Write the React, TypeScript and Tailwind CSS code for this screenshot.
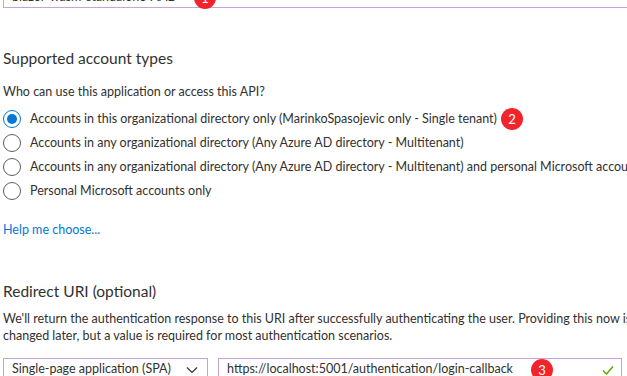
import React from 'react';

function Badge({ n }: { n: number }) {
  return (
    <span className="inline-flex h-[22px] w-[22px] items-center justify-center rounded-full bg-[#f0242a] text-[13px] leading-none text-white">
      {n}
    </span>
  );
}

function Radio({ checked, label, badge }: { checked?: boolean; label: string; badge?: number }) {
  return (
    <div className="flex h-[24px] items-center">
      <span
        className={
          checked
            ? 'flex h-[18px] w-[18px] shrink-0 items-center justify-center rounded-full border border-[#0078d4]'
            : 'flex h-[18px] w-[18px] shrink-0 items-center justify-center rounded-full border border-[#605e5c]'
        }
      >
        {checked && <span className="h-[10px] w-[10px] rounded-full bg-[#0078d4]" />}
      </span>
      <span className="ml-[9px] whitespace-nowrap">{label}</span>
      {badge && (
        <span className="ml-[4px]">
          <Badge n={badge} />
        </span>
      )}
    </div>
  );
}

export default function App() {
  const accountTypes = [
    { label: 'Accounts in this organizational directory only (MarinkoSpasojevic only - Single tenant)', checked: true, badge: 2 },
    { label: 'Accounts in any organizational directory (Any Azure AD directory - Multitenant)' },
    { label: 'Accounts in any organizational directory (Any Azure AD directory - Multitenant) and personal Microsoft accounts (e.g. Skype, Xbox)' },
    { label: 'Personal Microsoft accounts only' }
  ];

  return (
    <div className="relative h-[376px] w-[627px] overflow-hidden bg-white pl-[3px] text-[12.5px] text-[#323130] font-['Segoe_UI','Lato',sans-serif]">
      {/* name input, mostly scrolled off */}
      <div className="relative -mt-[25px] flex h-[33px] items-center border border-r-0 border-[#c6a3d8] pl-[8px]">
        <span className="mt-[12px]">blazor-wasm-standalone-AAD</span>
        <span className="absolute left-[190px] top-[11px]">
          <Badge n={1} />
        </span>
      </div>

      <h2 className="mt-[38px] text-[15.5px] leading-[24px]">Supported account types</h2>
      <p className="mt-[13px] leading-[18px]">Who can use this application or access this API?</p>

      <div className="mt-[6px] flex flex-col">
        {accountTypes.map((t, i) => (
          <Radio key={i} label={t.label} checked={t.checked} badge={t.badge} />
        ))}
      </div>

      <a className="mt-[18px] block leading-[18px] text-[#0078d4]">Help me choose...</a>

      <h2 className="mt-[40px] text-[15.5px] leading-[24px]">Redirect URI (optional)</h2>
      <p className="mt-[7px] leading-[17px]">
        <span className="block whitespace-nowrap">
          We'll return the authentication response to this URI after successfully authenticating the user. Providing this now is optional and it can be
        </span>
        <span className="block whitespace-nowrap">changed later, but a value is required for most authentication scenarios.</span>
      </p>

      <div className="mt-[14px] flex gap-[10px]">
        <div className="flex h-[22px] w-[205px] shrink-0 items-center justify-between border border-b-0 border-[#c6a3d8] pl-[8px] pr-[8px]">
          <span>Single-page application (SPA)</span>
          <svg width="14" height="14" viewBox="0 0 14 14" fill="none" stroke="#323130" strokeWidth="1.2">
            <path d="M2 4.5 L7 9.5 L12 4.5" />
          </svg>
        </div>
        <div className="relative flex h-[22px] w-[404px] shrink-0 items-center justify-between border border-b-0 border-[#c6a3d8] pl-[8px] pr-[6px]">
          <span>https://localhost:5001/authentication/login-callback</span>
          <span className="absolute left-[312px] top-[0px]">
            <Badge n={3} />
          </span>
          <svg width="14" height="14" viewBox="0 0 14 14" fill="none" stroke="#57a300" strokeWidth="1.4">
            <path d="M2 7.5 L5.5 11 L12 3.5" />
          </svg>
        </div>
      </div>
    </div>
  );
}
